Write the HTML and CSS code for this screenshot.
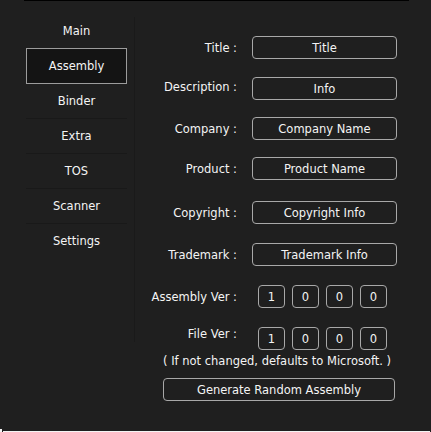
FILE: index.html
```html
<!DOCTYPE html>
<html>
<head>
<meta charset="utf-8">
<link rel="stylesheet" href="styles.css">
</head>
<body>
<div class="window">
  <div class="topbar"></div>
  <div class="main">
    <nav class="sidebar">
      <div class="nav-item">Main</div>
      <div class="nav-item active">Assembly</div>
      <div class="nav-item">Binder</div>
      <div class="nav-item sep">Extra</div>
      <div class="nav-item sep">TOS</div>
      <div class="nav-item sep">Scanner</div>
      <div class="nav-item sep">Settings</div>
    </nav>
    <section class="content">
      <div class="form">
        <label class="lbl">Title :</label><div class="field">Title</div>
        <label class="lbl lbl-up">Description :</label><div class="field">Info</div>
        <label class="lbl">Company :</label><div class="field">Company Name</div>
        <label class="lbl">Product :</label><div class="field">Product Name</div>
        <label class="lbl">Copyright :</label><div class="field">Copyright Info</div>
        <label class="lbl">Trademark :</label><div class="field">Trademark Info</div>
        <label class="lbl">Assembly Ver :</label>
        <div class="ver"><div class="vbox">1</div><div class="vbox">0</div><div class="vbox">0</div><div class="vbox">0</div></div>
        <label class="lbl lbl-file">File Ver :</label>
        <div class="ver"><div class="vbox">1</div><div class="vbox">0</div><div class="vbox">0</div><div class="vbox">0</div></div>
      </div>
      <p class="note">( If not changed, defaults to Microsoft. )</p>
      <div class="btn">Generate Random Assembly</div>
    </section>
  </div>
  <div class="bottom"></div>
</div>
</body>
</html>
```
FILE: styles.css
```css
html, body {
  margin: 0;
  padding: 0;
  background: #1f1f1f;
}
body {
  width: 431px;
  height: 432px;
  overflow: hidden;
  font-family: "DejaVu Sans", sans-serif;
  font-size: 11.5px;
  color: #f4f4f4;
}
.window {
  position: relative;
  width: 431px;
  height: 432px;
  display: flex;
  flex-direction: column;
}
.topbar {
  margin-left: 24px;
  width: 385px;
  height: 1px;
  background: #000;
}
.main {
  display: flex;
  align-items: flex-start;
  flex: 1;
}
.sidebar {
  width: 134px;
  padding-top: 12px;
  display: flex;
  flex-direction: column;
  align-items: flex-start;
  box-sizing: border-box;
}
.nav-item {
  margin-left: 26px;
  width: 101px;
  height: 35px;
  display: flex;
  align-items: center;
  justify-content: center;
  box-sizing: border-box;
}
.nav-item.sep {
  border-top: 1px solid #191919;
}
.nav-item.active {
  background: #141414;
  border: 1px solid #9c9c9c;
  height: 36px;
  margin-bottom: -1px;
}
.content {
  margin-top: 16px;
  height: 325px;
  border-left: 1px solid #1a1a1a;
  flex: 1;
  padding-top: 19px;
  box-sizing: border-box;
}
.form {
  display: grid;
  grid-template-columns: 102px 145px;
  column-gap: 15px;
  grid-template-rows: 41px 40px 40px 44px 42px 42px 42px 23px;
  align-items: start;
}
.lbl {
  height: 23px;
  display: flex;
  align-items: center;
  justify-content: flex-end;
  white-space: nowrap;
}
.lbl-up { margin-top: -2px; }
.lbl-file { margin-top: -5px; }
.field {
  height: 23px;
  border: 1px solid #a8a8a8;
  border-radius: 4px;
  box-sizing: border-box;
  display: flex;
  align-items: center;
  justify-content: center;
  white-space: nowrap;
}
.ver {
  display: flex;
  gap: 7px;
  padding-left: 6px;
}
.vbox {
  width: 27px;
  height: 23px;
  border: 1px solid #a8a8a8;
  border-radius: 4px;
  box-sizing: border-box;
  display: flex;
  align-items: center;
  justify-content: center;
}
.note {
  margin: 5px 0 0 28px;
  height: 13px;
  line-height: 13px;
  width: 228px;
  text-align: center;
  white-space: nowrap;
}
.btn {
  margin: 10px 0 0 28px;
  width: 232px;
  height: 23px;
  border: 1px solid #a8a8a8;
  border-radius: 4px;
  box-sizing: border-box;
  display: flex;
  align-items: center;
  justify-content: center;
  white-space: nowrap;
}
.bottom {
  position: absolute;
  left: 3px;
  right: 1px;
  bottom: 0;
  height: 1px;
  background: #f4f4f4;
}
.bottom::before {
  content: "";
  position: absolute;
  left: -3px;
  bottom: 0;
  width: 2px;
  height: 3px;
  background: #f4f4f4;
}
```
